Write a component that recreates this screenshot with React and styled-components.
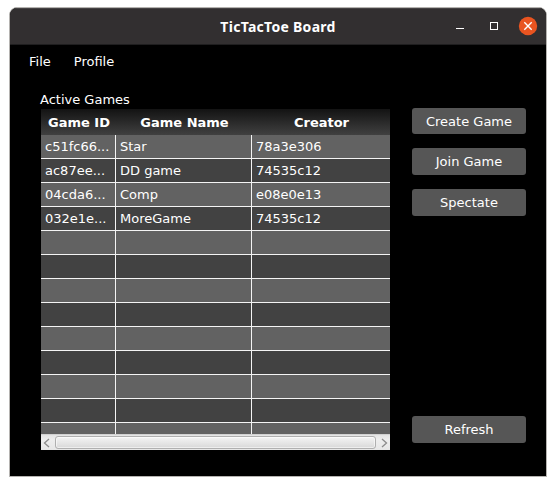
import React from "react";
import styled, { createGlobalStyle } from "styled-components";

const GlobalStyle = createGlobalStyle`
  * { box-sizing: border-box; }
  body { margin: 0; background: #ffffff; }
`;

const Desktop = styled.div`
  width: 556px;
  height: 486px;
  padding: 7px 0 0 9px;
  overflow: hidden;
  background: #ffffff;
`;

const Window = styled.div`
  width: 538px;
  height: 470px;
  border: 1px solid #b5b3b0;
  border-radius: 8px 8px 0 0;
  background: #000000;
  overflow: hidden;
  color: #ffffff;
  font: 13px/16px "DejaVu Sans", sans-serif;
`;

const TitleBar = styled.header`
  display: grid;
  grid-template-columns: 1fr auto 1fr;
  align-items: center;
  height: 37px;
  border-top: 1px solid #454344;
  border-bottom: 1px solid #1f1e1f;
  background: #322f30;
`;

const Title = styled.h1`
  grid-column: 2;
  margin: 0;
  font: bold 14px/20px "Noto Sans", sans-serif;
  letter-spacing: 0.28px;
  white-space: nowrap;
`;

const WindowControls = styled.div`
  display: flex;
  justify-content: flex-end;
  padding: 0 8px 1px 0;
`;

const MenuBar = styled.nav`
  display: flex;
  gap: 23px;
  height: 47px;
  padding: 9px 0 0 19px;
`;

const MenuItem = styled.span`
  white-space: nowrap;
`;

const Content = styled.main`
  display: flex;
  gap: 22px;
  padding-left: 31px;
`;

const TablePane = styled.section`
  width: 349px;
`;

const TableLabel = styled.div`
  height: 17px;
  margin-left: -1px;
`;

const Table = styled.div`
  height: 325px;
  overflow: hidden;
`;

const columns = "75px 136px 138px";

const HeaderRow = styled.div`
  display: grid;
  grid-template-columns: ${columns};
  height: 26px;
  background: linear-gradient(#131313, #404040);
  font-weight: bold;
  line-height: 27px;
  text-align: center;
`;

const HeaderCell = styled.span`
  padding-left: 1px;
`;

const Row = styled.div`
  display: grid;
  grid-template-columns: ${columns};
  height: 24px;
  border-bottom: 1px solid #f4f4f4;
  background: ${(p) => (p.$odd ? "#424242" : "#626262")};
`;

const Cell = styled.div`
  padding-left: 4px;
  line-height: 24px;
  white-space: nowrap;
  border-right: ${(p) => (p.$last ? "none" : "1px solid #f4f4f4")};
`;

const ScrollBar = styled.div`
  display: flex;
  align-items: center;
  gap: 2px;
  height: 16px;
  border-top: 1px solid #d2d2d2;
  background: linear-gradient(#e4e4e4, #eeeeee 30%, #e6e6e6);
`;

const Thumb = styled.div`
  flex: 1;
  height: 13px;
  border: 1px solid #afafaf;
  border-radius: 3px;
  background: linear-gradient(#f5f5f5, #d8d8d8);
  box-shadow: inset 0 0 0 1px rgba(255, 255, 255, 0.55);
`;

const Actions = styled.aside`
  display: flex;
  flex-direction: column;
  width: 114px;
  height: 351px;
  padding-top: 16px;
`;

const ActionButton = styled.button`
  height: ${(p) => p.$height || 27}px;
  margin: ${(p) => p.$margin || "0 0 14px"};
  padding: 0;
  border: 0;
  border-radius: 3px;
  background: #565656;
  color: #ffffff;
  font: 13px/27px "DejaVu Sans", sans-serif;
`;

const games = [
  ["c51fc66...", "Star", "78a3e306"],
  ["ac87ee...", "DD game", "74535c12"],
  ["04cda6...", "Comp", "e08e0e13"],
  ["032e1e...", "MoreGame", "74535c12"],
];
const rows = Array.from({ length: 13 }, (_, i) => games[i] || ["", "", ""]);

function ControlIcons() {
  return (
    <svg width="70" height="20" viewBox="0 0 70 20">
      <path d="M8 12.5h8" stroke="#fff" fill="none" />
      <rect x="42.5" y="6.5" width="7" height="7" stroke="#fff" fill="none" />
    </svg>
  );
}

function CloseIcon() {
  return (
    <svg width="20" height="20" viewBox="0 0 20 20">
      <circle cx="10" cy="10" r="9.2" fill="#e95420" />
      <path d="M6.3 6.3l7.4 7.4M13.7 6.3l-7.4 7.4" stroke="#fff" strokeWidth="1.4" />
    </svg>
  );
}

function Arrow({ right }) {
  return (
    <svg width="12" height="12" viewBox="0 0 12 12">
      <path d={right ? "M4 2l4.5 4l-4.5 4" : "M8 2l-4.5 4l4.5 4"} fill="none" stroke="#8c8c8c" strokeWidth="1.3" />
    </svg>
  );
}

export default function App() {
  return (
    <Desktop>
      <GlobalStyle />
      <Window>
        <TitleBar>
          <Title>TicTacToe Board</Title>
          <WindowControls>
            <ControlIcons />
            <CloseIcon />
          </WindowControls>
        </TitleBar>
        <MenuBar>
          <MenuItem>File</MenuItem>
          <MenuItem>Profile</MenuItem>
        </MenuBar>
        <Content>
          <TablePane>
            <TableLabel>Active Games</TableLabel>
            <Table>
              <HeaderRow>
                <HeaderCell>Game ID</HeaderCell>
                <HeaderCell>Game Name</HeaderCell>
                <HeaderCell>Creator</HeaderCell>
              </HeaderRow>
              {rows.map((row, i) => (
                <Row key={i} $odd={i % 2 === 1}>
                  {row.map((text, c) => (
                    <Cell key={c} $last={c === 2}>{text}</Cell>
                  ))}
                </Row>
              ))}
            </Table>
            <ScrollBar>
              <Arrow />
              <Thumb />
              <Arrow right />
            </ScrollBar>
          </TablePane>
          <Actions>
            <ActionButton $height={26}>Create Game</ActionButton>
            <ActionButton>Join Game</ActionButton>
            <ActionButton>Spectate</ActionButton>
            <ActionButton $margin="auto 0 0">Refresh</ActionButton>
          </Actions>
        </Content>
      </Window>
    </Desktop>
  );
}
